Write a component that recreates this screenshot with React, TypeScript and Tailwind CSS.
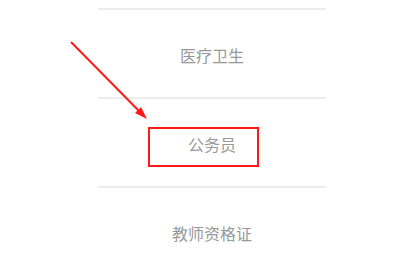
const items = ['医疗卫生', '公务员', '教师资格证']

export default function App() {
  return (
    <div className="relative w-[405px] h-[270px] bg-white overflow-hidden" style={{ fontFamily: '"Noto Sans CJK SC", "Noto Sans", sans-serif' }}>
      <div className="ml-[98px] mt-[8px] w-[228px]">
        {items.map(t => (
          <div key={t} className="h-[89px] border-t-2 border-[#ececec] flex items-center justify-center pt-[2px]">
            <span className="text-[16px] text-[#999999]">{t}</span>
          </div>
        ))}
      </div>

      {/* highlight box */}
      <div className="absolute left-[148px] top-[127px] w-[111px] h-[40px] border-2 border-[#ff1a1a]" />

      {/* arrow */}
      <svg className="absolute left-0 top-0" width="405" height="270" viewBox="0 0 405 270">
        <line x1="71" y1="42" x2="141" y2="113" stroke="#ff1a1a" strokeWidth="2" />
        <polygon points="147,119 135,113 141,107" fill="#ff1a1a" />
      </svg>
    </div>
  )
}
